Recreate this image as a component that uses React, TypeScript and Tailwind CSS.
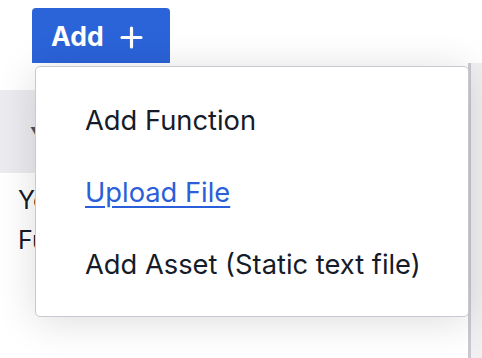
const items = [
    { label: 'Add Function', link: false },
    { label: 'Upload File', link: true },
    { label: 'Add Asset (Static text file)', link: false },
];

export default function App() {
    return (
        <div className="relative w-[482px] h-[358px] overflow-hidden bg-white font-['Inter',sans-serif] text-[#161b29]">
            <div className="h-[63px] px-[32px] pt-[8px]">
                <button className="flex items-center gap-[16px] h-[58px] pl-[19px] pr-[27px] bg-[#2b63d9] text-white rounded-[4px] text-[26.5px] font-bold">
                    Add
                    <svg width="23" height="23" viewBox="0 0 23 23" fill="none" stroke="currentColor" strokeWidth="3.2" strokeLinecap="round">
                        <path d="M11.5 2v19M2 11.5h19" />
                    </svg>
                </button>
            </div>

            <div className="flex h-[295px]">
                <div className="w-[468px] flex flex-col">
                    <div className="h-[27px] bg-white" />
                    <div className="h-[83px] bg-[#ececf0] flex items-center pl-[30px]">
                        <span className="text-[12px] text-[#4b5563]">▼</span>
                    </div>
                    <div className="pl-[18px] pt-[7px] text-[25px] leading-[40px]">
                        <p>Your functions</p>
                        <p>Functions are listed here</p>
                    </div>
                </div>
                <div className="w-[3px] bg-[#c9c9d1]" />
                <div className="flex-1 bg-[#f0f0f3]" />
            </div>

            <div className="absolute left-[35px] top-[66px] w-[434px] h-[251px] bg-white border border-[#c9c9d1] rounded-[5px] shadow-[0_4px_40px_rgba(0,0,0,0.14)] pt-[18px]">
                {items.map((it) => (
                    <div key={it.label} className="h-[72px] flex items-center pl-[49px] text-[27.3px]">
                        {it.link ? (
                            <a href="#" className="text-[#2b5fd9] underline underline-offset-[4px] decoration-[1.5px]">{it.label}</a>
                        ) : (
                            <span>{it.label}</span>
                        )}
                    </div>
                ))}
            </div>
        </div>
    );
}
